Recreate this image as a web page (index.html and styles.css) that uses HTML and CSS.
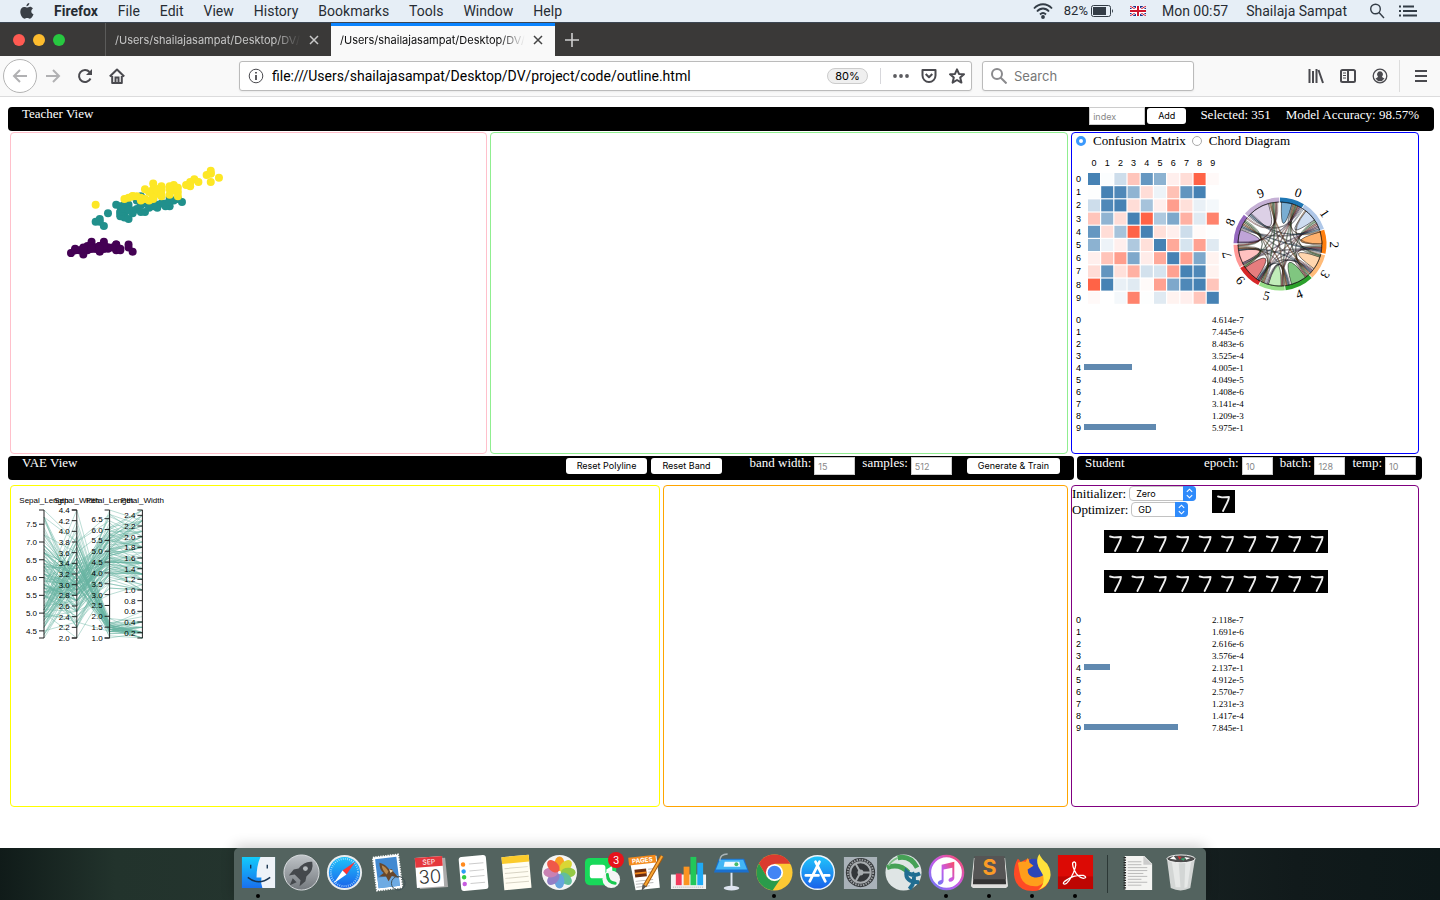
FILE: index.html
```html
<!DOCTYPE html>
<html lang="en">
<head>
<meta charset="utf-8">
<title>Teacher / Student outline</title>
<link rel="stylesheet" href="styles.css">
</head>
<body>
<nav class="menubar" aria-label="System menu">
  <svg class="apple" viewBox="0 0 14 17" aria-hidden="true"><path d="M9.3 0c.1 1.600-1.300 3.300-2.900 3.300C6.200 1.700 7.700.200 9.300 0zM7.100 4.600c.700 0 1.600-.800 2.900-.800 1 0 2.200.500 2.900 1.600-2.400 1.500-2 4.800.600 5.800-.700 2-2.200 4.500-3.700 4.500-1 0-1.400-.600-2.600-.600s-1.700.600-2.600.600C2.700 15.700.300 12 .300 8.700c0-3 1.900-4.800 3.900-4.800 1.300 0 2.200.700 2.900.700z"/></svg>
  <b>Firefox</b><span>File</span><span>Edit</span><span>View</span><span>History</span><span>Bookmarks</span><span>Tools</span><span>Window</span><span>Help</span>
  <div class="status">
    <svg class="wifi" viewBox="0 0 20 16" fill="none" stroke="#333c46" stroke-width="1.800"><path d="M1 5.500C6-.2 14-.2 19 5.500M4 8.500c3.500-4 8.500-4 12 0M7 11.500c2-2 4-2 6 0"/><circle cx="10" cy="14" r="1" fill="#333c46"/></svg>
    <span class="pct">82%</span>
    <svg class="batt" viewBox="0 0 23 12"><rect x=".5" y=".5" width="19" height="11" rx="2" fill="none" stroke="#333c46"/><path d="M2 2h13v8H2zM21 4q2 2 0 4z" fill="#333c46"/></svg>
    <svg class="flag" viewBox="0 0 16 10"><path fill="#1c2e8a" d="M0 0h16v10H0z"/><path d="m0 0 16 10M16 0 0 10" stroke="#fff" stroke-width="2.400"/><path d="m0 0 16 10M16 0 0 10" stroke="#d0142c"/><path d="M8 0v10M0 5h16" stroke="#fff" stroke-width="4"/><path d="M8 0v10M0 5h16" stroke="#d0142c" stroke-width="2"/></svg>
    <span class="clock">Mon 00:57</span><span class="user">Shailaja Sampat</span>
    <svg class="find" viewBox="0 0 16 16" fill="none" stroke="#333c46" stroke-width="1.400"><circle cx="6.500" cy="6" r="4.800"/><path d="m10 9.500 5 5.500"/></svg>
    <svg class="list" viewBox="0 0 18 12" stroke="#333c46" stroke-width="1.800"><path d="M0 1.500h2M4 1.500h11M0 6h2M4 6h14M0 10.500h2M4 10.500h14"/></svg>
  </div>
</nav>

<header class="tabs">
  <div class="lights"><i class="red"></i><i class="amber"></i><i class="green"></i></div>
  <div class="tab"><span>/Users/shailajasampat/Desktop/DV/project</span><button aria-label="Close tab"><svg viewBox="0 0 10 10"><path d="m1 1 8 8M9 1 1 9"/></svg></button></div>
  <div class="tab active"><span>/Users/shailajasampat/Desktop/DV/project</span><button aria-label="Close tab"><svg viewBox="0 0 10 10"><path d="m1 1 8 8M9 1 1 9"/></svg></button></div>
  <button class="plus" aria-label="New tab"><svg viewBox="0 0 14 14"><path d="M7 0v14M0 7h14"/></svg></button>
</header>

<div class="toolbar">
  <button class="back" aria-label="Back"><svg viewBox="0 0 16 16"><path d="M15 8H2M8 2 2 8l6 6"/></svg></button>
  <button class="tool faint" aria-label="Forward"><svg viewBox="0 0 16 16"><path d="M1 8h13M8 2l6 6-6 6"/></svg></button>
  <button class="tool" aria-label="Reload"><svg viewBox="0 0 16 16"><path d="M13.500 10.500A6 6 0 1 1 12.500 4"/><path d="M15 1v6H9z" fill="#4a4a4f" stroke="none"/></svg></button>
  <button class="tool" aria-label="Home"><svg viewBox="0 0 16 16"><path d="M.800 8.500 8 1.500l7.200 7M3.200 8v7h9.600V8" stroke-linejoin="round"/><path d="M6.500 15V9.500h3V15"/></svg></button>
  <div class="urlbox">
    <svg class="info" viewBox="0 0 16 16"><circle cx="8" cy="8" r="6.800"/><path d="M8 7v5M8 4v1.600" stroke-width="1.800"/></svg>
    <input aria-label="Address" value="file:///Users/shailajasampat/Desktop/DV/project/code/outline.html">
    <button class="zoom">80%</button>
    <svg class="dots" viewBox="0 0 16 16"><g fill="#5c5c60" stroke="none"><circle cx="2" cy="8" r="1.900"/><circle cx="8" cy="8" r="1.900"/><circle cx="14" cy="8" r="1.900"/></g></svg>
    <svg viewBox="0 0 16 16"><path d="M1.500 2h13v5.500a6.500 6.500 0 0 1-13 0zM4.700 6 8 9.300 11.300 6" stroke-linejoin="round"/></svg>
    <svg viewBox="0 0 16 16"><path d="m8 1.300 2 4.600 5 .4-3.800 3.300 1.200 5L8 12l-4.400 2.600 1.200-5L1 6.300l5-.4z" stroke-linejoin="round"/></svg>
  </div>
  <div class="searchbox">
    <svg viewBox="0 0 16 16"><circle cx="6" cy="6" r="5"/><path d="m9.500 9.500 6 6"/></svg>
    <input aria-label="Search" placeholder="Search">
  </div>
  <div class="right">
    <button class="tool" aria-label="Library"><svg viewBox="0 0 16 16"><path d="M1.500 1v14M5 3v12M8.500 1v14M10.500 2l4.500 13"/></svg></button>
    <button class="tool" aria-label="Sidebars"><svg viewBox="0 0 16 16"><rect x="1" y="2" width="14" height="12" rx="1.500"/><path d="M8 2v12"/><path d="M3 5h3M3 7.500h3M3 10h3" stroke-width="1"/></svg></button>
    <button class="tool" aria-label="Account"><svg viewBox="0 0 16 16"><circle cx="8" cy="8" r="6.800" stroke-width="1.300"/><path d="M8 3.300a3 3 0 0 1 2 5.200q0 1 2.500 2-1.800 2.700-4.500 2.700T3.500 10.500Q6 9.500 6 8.500a3 3 0 0 1 2-5.200z" fill="#4a4a4f" stroke="none"/></svg></button>
    <button class="tool menu" aria-label="Menu"><svg viewBox="0 0 16 16"><path d="M2 3h12M2 8h12M2 13h12"/></svg></button>
  </div>
</div>

<main class="page">
  <div class="bar top">
    <h2>Teacher View</h2>
    <div class="bar-tools">
      <input class="w-index" placeholder="index" aria-label="index"><button class="add">Add</button>
      <span class="selected">Selected: 351</span><span>Model Accuracy: 98.57%</span>
    </div>
  </div>
  <div class="row upper">
    <section class="panel pink"><svg class="scatter" id="scatter" viewBox="0 0 240 140"></svg></section>
    <section class="panel lime"></section>
    <section class="panel blue">
      <div class="radios">
        <label><input type="radio" name="view" checked>Confusion Matrix</label>
        <label><input type="radio" name="view">Chord Diagram</label>
      </div>
      <div class="figs">
        <svg class="matrix" id="matrix" viewBox="0 0 150 155"></svg>
        <svg class="chord" id="chord" viewBox="0 0 130 130"></svg>
      </div>
      <div class="probs" id="teacher-probs"></div>
    </section>
  </div>
  <div class="row bars">
    <div class="bar">
      <h2>VAE View</h2>
      <div class="bar-tools">
        <button>Reset Polyline</button><button class="band">Reset Band</button>
        <label>band width: <input class="w-mid" placeholder="15"></label>
        <label>samples: <input class="w-mid" placeholder="512"></label>
        <button class="train">Generate &amp; Train</button>
      </div>
    </div>
    <div class="bar">
      <h2>Student</h2>
      <div class="bar-tools student">
        <label>epoch: <input class="w-small" placeholder="10"></label>
        <label>batch: <input class="w-small" placeholder="128"></label>
        <label>temp: <input class="w-small" placeholder="10"></label>
      </div>
    </div>
  </div>
  <div class="row lower">
    <section class="panel yellow"><svg class="parallel" id="parallel" viewBox="0 0 170 165"></svg></section>
    <section class="panel orange"></section>
    <section class="panel purple">
      <div class="setup">
        <div class="opts">
          <label>Initializer: <span class="pick wide"><select><option>Zero</option></select><svg viewBox="0 0 12 14"><path d="M3.500 5.500 6 3l2.500 2.500M3.500 8.500 6 11l2.500-2.500"/></svg></span></label>
          <label>Optimizer: <span class="pick"><select><option>GD</option></select><svg viewBox="0 0 12 14"><path d="M3.500 5.500 6 3l2.500 2.500M3.500 8.500 6 11l2.500-2.500"/></svg></span></label>
        </div>
        <svg class="digit" data-count="1"></svg>
      </div>
      <svg class="strip" data-count="10"></svg>
      <svg class="strip" data-count="10"></svg>
      <div class="probs" id="student-probs"></div>
    </section>
  </div>
</main>

<footer class="desk">
  <div class="dock">
    <div class="app on"><svg viewBox="0 0 40 40"><defs><linearGradient id="gf" x2="0" y2="1"><stop stop-color="#12cbfa"/><stop offset="1" stop-color="#1a6fee"/></linearGradient><linearGradient id="gs" x2="0" y2="1"><stop stop-color="#bfc4c8"/><stop offset="1" stop-color="#74797e"/></linearGradient><linearGradient id="gb" x2="0" y2="1"><stop stop-color="#20c4fb"/><stop offset="1" stop-color="#1a62ea"/></linearGradient></defs><path fill="url(#gf)" d="M3 4h34v32H3z"/><path fill="#eef2f8" d="M22 4h15v32H24q-2-6-1-11h-5q0-12 4-21z"/><path d="M12 12v4M29 12v4M9 25q11 9 23 0" fill="none" stroke="#17324f" stroke-width="1.400"/></svg></div>
    <div class="app"><svg viewBox="0 0 40 40"><circle cx="20" cy="20" r="18" fill="url(#gs)" stroke="#d9dcdf"/><path d="M31 9q-8-1-14 7l-5 1-5 6 6-1 6 6-1 6 6-5 1-5q8-6 6-15zM11 26l-3 7 7-3z" fill="#44484c"/><circle cx="24" cy="16" r="2.500" fill="#b5babd"/></svg></div>
    <div class="app"><svg viewBox="0 0 40 40"><circle cx="20" cy="20" r="18" fill="#e9ecee"/><circle cx="20" cy="20" r="16" fill="url(#gb)"/><circle cx="20" cy="20" r="14" fill="none" stroke="#bfe7ff" stroke-width="2" stroke-dasharray=".7 1.500"/><path fill="#f33" d="m31 9-13 9 4 4z"/><path fill="#fff" d="m9 31 9-13 4 4z"/></svg></div>
    <div class="app"><svg viewBox="0 0 40 40"><g transform="rotate(-7 20 20)"><path d="M7 3h26v34H7z" fill="#fff" stroke="#fff" stroke-width="2" stroke-dasharray="1.500 1"/><path fill="#4289d1" d="M9 5h22v30H9z"/><path fill="#6eabe3" d="M9 24h22v11H9z"/><path fill="#68472b" d="M13 9q6 2 9 8 4-1 4 3l5 7-7-3-4 5-2-5-7-1 5-3q-4-4-3-11z"/><path fill="#b98a4e" d="M15 12q4 2 6 7l-2 3q-4-4-4-10z"/><path fill="#ead7ae" d="m22 17 4 2-3 2z"/></g><circle cx="31" cy="31" r="7" fill="none" stroke="#405054"/></svg></div>
    <div class="app"><svg viewBox="0 0 40 40"><g transform="rotate(-4 20 20)"><path fill="#aaa" d="M7 6h29l1 30H8z"/><path fill="#fff" d="M5 4h28v31H5z"/><path fill="#e5373d" d="M5 4h28v10H5z"/><text x="19" y="11.500" text-anchor="middle" font-size="7" fill="#fff">SEP</text><text x="19" y="31" text-anchor="middle" font-size="19" fill="#333" font-weight="300">30</text></g></svg></div>
    <div class="app"><svg viewBox="0 0 40 40"><g transform="rotate(-5 20 20)"><rect x="6" y="3" width="28" height="35" rx="3" fill="#fff"/><path d="M16 11h15M16 18h15M16 24h15M16 31h15" stroke="#ccc"/><circle cx="10" cy="11" r="2.300" fill="#ff8a1e"/><circle cx="10" cy="18" r="2.300" fill="#2b9cf5"/><circle cx="10" cy="24" r="2.300" fill="#31cd45"/><circle cx="10" cy="31" r="2.300" fill="#c75ce0"/></g></svg></div>
    <div class="app"><svg viewBox="0 0 40 40"><g transform="rotate(-5 20 20)"><path fill="#fffdf2" d="M6 3h28v34H6z"/><path fill="#fbcb2c" d="M6 3h28v7H6z"/><path d="M8 15h24M8 20h24M8 25h24M8 30h24" stroke="#d8d4c4"/></g></svg></div>
    <div class="app"><svg viewBox="0 0 40 40"><circle cx="20" cy="20" r="18" fill="#f4f4f4"/><g opacity=".95"><ellipse cx="20" cy="11" rx="5" ry="7.500" fill="#fb9d18"/><ellipse cx="20" cy="11" rx="5" ry="7.500" fill="#d9d52a" transform="rotate(45 20 20)"/><ellipse cx="20" cy="11" rx="5" ry="7.500" fill="#8fc73c" transform="rotate(90 20 20)"/><ellipse cx="20" cy="11" rx="5" ry="7.500" fill="#5bbd96" transform="rotate(135 20 20)"/><ellipse cx="20" cy="11" rx="5" ry="7.500" fill="#5fa0dc" transform="rotate(180 20 20)"/><ellipse cx="20" cy="11" rx="5" ry="7.500" fill="#8c79c4" transform="rotate(225 20 20)"/><ellipse cx="20" cy="11" rx="5" ry="7.500" fill="#c77bb0" transform="rotate(270 20 20)"/><ellipse cx="20" cy="11" rx="5" ry="7.500" fill="#ef5040" transform="rotate(315 20 20)"/></g></svg></div>
    <div class="app"><svg viewBox="0 0 40 40"><rect x="2" y="5" width="32" height="28" rx="5" fill="#18d95a"/><rect x="7" y="12" width="16" height="14" rx="3" fill="#fff"/><path fill="#fff" d="m24 17 6-4v12l-6-4z"/><circle cx="29" cy="27" r="9" fill="#f5f5f5"/><path d="M25 22q0 8 8 9" stroke="#18c950" stroke-width="3" stroke-linecap="round" fill="none"/></svg><span class="badge">3</span></div>
    <div class="app"><svg viewBox="0 0 40 40"><g transform="rotate(-6 20 20)"><path fill="#fff" d="M5 4h28v33H8z"/><path fill="#f48a1c" d="M4 3h28v8H4z"/><text x="18" y="9.500" text-anchor="middle" font-size="6.500" fill="#fff" font-weight="700">PAGES</text><path fill="#6b2d12" d="M9 16h12v8H9z"/><path fill="#f48a1c" d="M9 19h12v2H9z"/><path d="M9 28h18M9 31h18M9 34h14M23 17h7M23 20h7" stroke="#bbb"/></g><path d="M37 3 19 34" stroke="#a85a0b" stroke-width="4"/><path d="M37 3 19 34" stroke="#f9a734" stroke-width="2"/><path fill="#555" d="m17 32 4 2-5 5z"/></svg></div>
    <div class="app"><svg viewBox="0 0 40 40"><path fill="#f2f2f2" d="M2 22h36v15H2z"/><path fill="#f33a5c" d="M7 21h6v12H7z"/><path fill="#fb9422" d="M15 14h6v19h-6z"/><path fill="#22c759" d="M22 4h6v29h-6z"/><path fill="#1fa9f5" d="M29 10h6v23h-6z"/><path d="M4 35h32" stroke="#aaa" stroke-dasharray="1 1"/></svg></div>
    <div class="app"><svg viewBox="0 0 40 40"><ellipse cx="20" cy="36" rx="8" ry="2.500" fill="#dce3ee"/><path d="M20 20v16" stroke="#dfe6f0" stroke-width="2"/><path fill="#1a70cf" d="M7 6h26l5 14H2z"/><path fill="#43b6f5" d="M8 7h24l4 10H4z"/><path fill="#f2fbff" d="M13 9h15l1 5H12z"/><path d="M8 8Q8 1 16 1" stroke="#aab5b8" fill="none" stroke-width="1.500"/><circle cx="25" cy="11.500" r="2" fill="#43bb6c"/></svg></div>
    <div class="app on"><svg viewBox="0 0 40 40"><circle cx="20" cy="20" r="18.500" fill="#fcc934"/><path fill="#db3a2f" d="M20 20V11h16.200A18.500 18.500 0 0 0 4 10.700l8.200 13.800z"/><path fill="#2a9b4b" d="M4 10.700A18.500 18.500 0 0 0 18 38.400l9.800-14.400L20 29l-7.800-4.500z"/><circle cx="20" cy="20" r="8.800" fill="#fff"/><circle cx="20" cy="20" r="7" fill="#4285f4"/></svg></div>
    <div class="app"><svg viewBox="0 0 40 40"><circle cx="20" cy="20" r="18" fill="#eef4fa"/><circle cx="20" cy="20" r="16.500" fill="url(#gb)"/><path d="M22 9 12 29M18 9l10 20M8 23h13M27 23h5" stroke="#fff" stroke-width="2.800" stroke-linecap="round"/></svg></div>
    <div class="app"><svg viewBox="0 0 40 40"><path fill="#a9b2b9" d="M3 4h34v33H3z"/><circle cx="20" cy="20" r="15" fill="#34373a"/><circle cx="20" cy="20" r="13" fill="none" stroke="#9a9ea1" stroke-width="2" stroke-dasharray="1.600 1.100"/><circle cx="20" cy="20" r="10.500" fill="none" stroke="#a7abae" stroke-width="2"/><path d="m20 20-5-9m5 9-5 9m5-9h10" stroke="#a7abae" stroke-width="2"/><circle cx="20" cy="20" r="3" fill="#a7abae"/></svg></div>
    <div class="app"><svg viewBox="0 0 40 40"><circle cx="20" cy="20" r="18.500" fill="#dfe5e5"/><path fill="none" stroke="#46a156" stroke-width="5" d="M3 15q13-5 22 5M14 5q13-3 20 10"/><path fill="none" stroke="#7fc089" stroke-width="2" d="M14 5Q7 8 5 13"/><path fill="none" stroke="#206d91" stroke-width="4" d="M37 21q-8 4-14-2-2 11 13 11M29 20q5 8-3 17"/></svg></div>
    <div class="app on"><svg viewBox="0 0 40 40"><defs><linearGradient id="gi" x1="0" y1="1" x2="1" y2="0"><stop stop-color="#6a7bf6"/><stop offset=".5" stop-color="#c65ae8"/><stop offset="1" stop-color="#fb4c62"/></linearGradient></defs><circle cx="20" cy="20" r="17" fill="#fff" stroke="url(#gi)" stroke-width="2.500"/><path fill="url(#gi)" d="M15 12 28 9v17q-1 4-5 3.500-3-3 3-5V15l-9 2v12q-1 4-5 3.500-3-3 3-5z"/></svg></div>
    <div class="app on"><svg viewBox="0 0 40 40"><path fill="#dfdfdd" d="M4 5h32l3 29-2 2H3l-2-2z"/><path fill="#343434" d="M5 3h30l2 29H3z"/><path fill="#555" d="M5 3h30l2 24H3z"/><text x="20" y="23" font-size="22" font-weight="700" text-anchor="middle" fill="#fb9b26">S</text></svg></div>
    <div class="app on"><svg viewBox="0 0 40 40"><path fill="#ff4a25" d="M5 6q2 1 3 4 4-4 10-4l14 6 6 8q0 19-18 19Q3 39 1 22q0-10 4-16z"/><circle cx="21" cy="18" r="12" fill="#2d46b8"/><path fill="#ff9e1b" d="M5 10q5-2 8-1l2-4q2 2 2 5l4 3-6 4q0 7 7 8 8 1 12-6 2 12-9 15-13 1-17-9-2-8-3-15z"/><path fill="#ffe23b" d="M27 1q2 5 8 10 5 8 3 15-3 9-12 12 7-6 5-15l-5-9q-3-7 1-13z"/></svg></div>
    <div class="app on"><svg viewBox="0 0 40 40"><path fill="#dc0a05" d="M2 2h36v35H2z"/><path fill="#a80100" d="M2 24h36v13H2z" opacity=".6"/><path d="M19 9q-4 0 0 9 3 7 9 8 5-1 0-3-9-1-16 4-7 4-3 5 4-1 9-12 4-10 1-11z" stroke="#fff" fill="none" stroke-width="1.300"/></svg></div>
    <i class="divider"></i>
    <div class="app"><svg viewBox="0 0 40 40"><path fill="#f4f4f2" d="M7 3h20l8 8v27H7z"/><path fill="#ccc" d="M26 3v9h9z"/><path d="M10 9h14M10 12h14M10 15h20M10 18h20M10 21h16M10 24h20M10 27h14M10 30h20M10 33h14" stroke="#aaa" stroke-width=".8"/><path d="M7 4v34" stroke="#222" stroke-width="2.500" stroke-dasharray="1.300 1.300"/></svg></div>
    <div class="app"><svg viewBox="0 0 40 40"><path fill="#d3d6d5" d="m6 5 4 31q10 5 20 0l5-31z"/><path fill="#e6e8e7" d="m11 8 4 27h5L18 8zM25 8l-1 28 3-1 4-27z"/><ellipse cx="20.500" cy="6" rx="14.500" ry="4" fill="#4d4d4d" stroke="#f1f1f1"/><path fill="#fff" d="m9 6 4-3 3 4zM24 4l6 1-4 2z"/><path fill="#c33" d="m17 3 4 1-2 3z"/><path fill="#38a870" d="m20 6 5-1-2 3z"/></svg></div>
  </div>
</footer>
<script src="charts.js"></script>
</body>
</html>
```

FILE: styles.css
```css
* { box-sizing: border-box; }
body {
  margin: 0;
  min-height: 100vh;
  display: flex;
  flex-direction: column;
  background: #fff;
  font: 13px/16px "Liberation Serif", "Times New Roman", serif;
  color: #000;
}
svg { display: block; flex: none; }
button, input, select { font: inherit; color: inherit; margin: 0; }
button { border: 0; padding: 0; background: none; }

.menubar {
  display: flex;
  align-items: center;
  gap: 20px;
  height: 23px;
  padding: 0 23px 0 20px;
  background: #e6eef6;
  border-bottom: 1px solid #3c4652;
  font: 14px/22px Roboto, "Open Sans", sans-serif;
  color: #262c33;
}
.apple { width: 14px; height: 17px; fill: #3a3f46; }
.status { display: flex; align-items: center; margin-left: auto; }
.wifi { width: 20px; height: 16px; }
.pct { font-size: 13px; margin: 0 3px 0 11px; }
.batt { width: 23px; height: 12px; }
.flag { width: 16px; height: 10px; margin: 0 16px; }
.user { margin: 0 22px 0 18px; }
.find { width: 16px; height: 16px; margin-right: 14px; }
.list { width: 18px; height: 12px; }

.tabs { display: flex; height: 33px; background: #3a3938; font: 11px/16px Inter, sans-serif; }
.lights { display: flex; align-items: center; gap: 8px; width: 106px; padding-left: 13px; border-right: 1px solid #5b5b5a; }
.lights i { width: 12px; height: 12px; border-radius: 50%; }
.red { background: #ff5a52; }
.amber { background: #fdbc2e; }
.green { background: #27c840; }
.tab { display: flex; align-items: center; gap: 8px; width: 225px; padding: 0 12px 0 9px; color: #c6c6c6; }
.tab span { flex: 1; overflow: hidden; white-space: nowrap; mask-image: linear-gradient(90deg, #000 86%, transparent 100%); }
.tab svg { width: 10px; height: 10px; stroke: #c9c9c9; stroke-width: 1.5; }
.tab.active { width: 224px; background: #f9f9f9; color: #0c0c0d; padding-bottom: 3px; border-top: 3px solid #0a84ff; }
.tab.active svg { stroke: #444; }
.plus { padding: 0 10px; }
.plus svg { width: 14px; height: 14px; stroke: #cfcfcf; stroke-width: 1.6; }

.toolbar {
  display: flex;
  align-items: center;
  height: 41px;
  padding: 0 3px;
  background: #f9f9f9;
  border-bottom: 1px solid #dcdcdd;
  font: 13px/18px Inter, sans-serif;
}
.toolbar svg { width: 16px; height: 16px; fill: none; stroke: #4a4a4f; stroke-width: 2; }
.back { display: grid; place-items: center; width: 34px; height: 34px; border: 1px solid #b4b4b4; border-radius: 50%; background: #fff; }
.toolbar .back svg, .toolbar .faint svg { stroke: #b1b1b3; }
.tool { display: grid; place-items: center; width: 32px; height: 32px; }
.urlbox, .searchbox { display: flex; align-items: center; height: 30px; border: 1px solid #bbb; border-radius: 3px; background: #fff; box-shadow: 0 1px 2px #0001; }
.urlbox { flex: 1; gap: 12px; margin-left: 106px; padding: 0 6px 0 8px; }
.toolbar .info { stroke-width: 1; }
.urlbox input, .searchbox input { flex: 1; min-width: 0; border: 0; padding: 0; outline: 0; background: none; }
.urlbox input { margin-left: -4px; font: 14px/18px Roboto, sans-serif; }
.zoom { width: 41px; height: 16px; border: 1px solid #ccc; border-radius: 8px; background: #efefef; font-size: 11px; line-height: 14px; }
.toolbar .dots { box-sizing: content-box; padding-left: 12px; border-left: 1px solid #d7d7db; }
.searchbox { width: 212px; margin: 0 106px 0 10px; padding: 0 8px; gap: 7px; }
.toolbar .searchbox svg { stroke: #8a8a8d; }
.searchbox input::placeholder { color: #777; }
.right { display: flex; }
.menu { width: 38px; margin-left: 3px; border-left: 1px solid #ddd; padding-left: 4px; }

.page { flex: 1; padding-top: 10px; }
.bar { display: flex; justify-content: space-between; height: 24px; background: #000; color: #fff; border-radius: 4px; padding: 0 15px 0 14px; }
.bar.top { margin: 0 6px 1px 8px; }
.bar h2 { margin: 0; font: inherit; line-height: 14px; }
.bars .bar { padding-right: 14px; padding-left: 14px; }
.bars .bar + .bar { padding: 0 6px 0 8px; }
.bar-tools { display: flex; align-items: flex-start; white-space: nowrap; }
.bar-tools > span { line-height: 16px; }
.bar-tools .selected { margin: 0 15px 0 14px; }
.bar-tools label { display: flex; gap: 3px; line-height: 14px; margin-left: 7px; }
.bar-tools button { height: 16px; margin-top: 1px; padding: 0 11px; border-radius: 3px; background: #fff; color: #000; font: 9px/16px Inter, sans-serif; }
.bars .bar-tools button { margin-top: 2px; }
.bar-tools .add { margin-left: 2px; }
.bars .bar-tools .band { margin: 2px 21px 0 4px; }
.bar-tools .train { margin-left: 15px; }
.bar input { height: 18px; border: 1px solid #ccc; padding: 0 3px; background: #fff; color: #000; font: 9px/16px Inter, sans-serif; }
.bars .bar input { margin-top: 1px; }
.bar input::placeholder { color: #888; }
.bar .w-index { width: 56px; }
.bar .w-mid { width: 41px; }
.bar .w-small { width: 31px; }

.row { display: grid; column-gap: 3px; }
.upper, .lower { padding: 0 21px 0 10px; }
.upper { grid-template-columns: 477fr 578fr 348fr; }
.bars { grid-template-columns: 1066fr 345fr; margin: 2px 18px 5px 8px; }
.lower { grid-template-columns: 650fr 405fr 348fr; }
.panel { min-width: 0; min-height: 322px; border: 1px solid; border-radius: 4px; }
.pink { border-color: pink; }
.lime { border-color: lightgreen; }
.blue { border-color: blue; }
.yellow { border-color: #ff0; }
.orange { border-color: orange; }
.purple { border-color: purple; }

.scatter { width: 240px; height: 140px; }
.radios { display: flex; gap: 6px; padding-left: 4px; }
.radios label { display: flex; align-items: center; gap: 7px; }
.radios input { appearance: none; width: 10px; height: 10px; border: 1px solid #aaa; border-radius: 50%; background: #fff; }
.radios input:checked { border: 3px solid #3b99fc; }
.figs { display: flex; align-items: flex-start; }
.figs text, .parallel text { font-family: "Liberation Sans", Arial, sans-serif; }
.matrix { width: 150px; height: 155px; }
.chord { width: 130px; height: 130px; margin-top: 30px; margin-left: -7px; }
.figs .tick { font: 13px "Liberation Serif", serif; }
.probs { padding: 0 0 0 4px; }
.blue .probs { padding-top: 5px; }
.purple .probs { padding-top: 4px; }
.prob { display: grid; grid-template-columns: 8px 128px auto; height: 12px; line-height: 12px; align-items: center; font-size: 9px; }
.prob span { font: 9px/12px "Liberation Sans", Arial, sans-serif; }
.prob i { height: 6px; margin-bottom: 2px; background: #6089b0; }

.setup { display: flex; height: 44px; }
.opts { width: 140px; }
.opts label { display: flex; gap: 3px; height: 16px; line-height: 15px; }
.pick { position: relative; width: 57px; height: 15px; }
.pick.wide { width: 67px; }
.pick select { display: block; appearance: none; width: 100%; height: 15px; border: 1px solid #c2c2c2; border-radius: 4px; background: #fff; padding: 0 6px; font: 9px/13px Inter, sans-serif; }
.pick svg { position: absolute; top: 0; right: 0; width: 13px; height: 15px; border-radius: 0 4px 4px 0; background: #2f8bfb; fill: none; stroke: #fff; pointer-events: none; }
.digit { width: 23px; height: 23px; margin-top: 4px; background: #000; }
.strip { width: 224px; height: 23px; margin: 0 0 17px 32px; background: #000; }

.parallel { width: 170px; height: 165px; overflow: visible; }

.desk { display: flex; justify-content: center; height: 52px; background: linear-gradient(90deg, #101b19, #22332c 8%, #2b3835 50%, #111a1b 90%, #0d1819); }
.dock { display: flex; width: 972px; padding: 0 3px; background: #53635f; border-radius: 5px 5px 0 0; box-shadow: 0 -2px 14px #0003; }
.app { position: relative; width: 43px; padding: 5px 2px 0; }
.app svg { width: 39px; height: 39px; font-family: Inter, sans-serif; }
.app.on::after { content: ""; position: absolute; left: 19px; bottom: 2px; width: 4px; height: 4px; border-radius: 50%; background: #000; }
.badge { position: absolute; top: 4px; right: 0; width: 16px; height: 16px; border-radius: 50%; background: #e7131b; color: #fff; font: 10px/16px Inter, sans-serif; text-align: center; }
.divider { width: 1px; margin: 7px 8px 7px 10px; background: #2c3836; }
```

FILE: charts.js
```js
const NS = 'http://www.w3.org/2000/svg';
function add(parent, tag, attrs, text) {
  const el = document.createElementNS(NS, tag);
  for (const k in attrs) el.setAttribute(k, attrs[k]);
  if (text !== undefined) el.textContent = text;
  parent.appendChild(el);
  return el;
}

// Iris measurements in tenths: sepal length, sepal width, petal length, petal width.
const species = [
  '51351402 49301402 47321302 46311502 50361402 54391704 46341403 50341502 44291402 49311501 54371502 48341602 48301401 43301101 58401202 57441504 54391304 51351403 57381703 51381503 54341702 51371504 46361002 51331705 48341902 50301602 50341604 52351502 52341402 47321602 48311602 54341504 52411501 55421402 49311502 50321202 55351302 49361401 44301302 51341502 50351303 45231303 44321302 50351606 51381904 48301403 51381602 46321402 53371502 50331402',
  '70324714 64324515 69314915 55234013 65284615 57284513 63334716 49243310 66294613 52273914 50203510 59304215 60224010 61294714 56293613 67314414 56304515 58274110 62224515 56253911 59324818 61284013 63254915 61284712 64294313 66304414 68284814 67305017 60294515 57263510 55243811 55243710 58273912 60275116 54304515 60344516 67314715 63234413 56304113 55254013 55264412 61304614 58264012 50233310 56274213 57304212 57294213 62294313 51253011 57284113',
  '63336025 58275119 71305921 63295618 65305822 76306621 49254517 73296318 67255818 72366125 65325120 64275319 68305521 57255020 58285124 64325323 65305518 77386722 77266923 60225015 69325723 56284920 77286720 63274918 67335721 72326018 62284818 61304918 64285621 72305816 74286119 79386420 64285622 63285115 61265614 77306123 63345624 64315518 60304818 69315421 67315624 69315123 58275119 68325923 67335725 67305223 63255019 65305220 62345423 59305118'
].map(s => s.split(' ').map(r => r.match(/../g).map(v => v / 10)));

// Scatter plot
const scatter = document.getElementById('scatter');
species.forEach((rows, k) => rows.forEach(r => add(scatter, 'circle', {
  cx: 60 + (r[0] - 4.3) * 41.1, cy: 121.5 - (r[2] - 1) * 14.2, r: 4,
  fill: ['#440154', '#21908c', '#fde725'][k]
})));

// Parallel coordinates
const parallel = document.getElementById('parallel');
const axes = [
  ['Sepal_Length', 4.3, 7.9, 4.5, 0.5], ['Sepal_Width', 2, 4.4, 2, 0.2],
  ['Petal_Length', 1, 6.9, 1, 0.5], ['Petal_Width', 0.1, 2.5, 0.2, 0.2]
];
const ax = i => 33 + i * 32.8;
const ay = (i, v) => 152 - (v - axes[i][1]) / (axes[i][2] - axes[i][1]) * 128;
species.flat().forEach(r => add(parallel, 'path', {
  d: 'M' + r.map((v, i) => ax(i) + ',' + ay(i, v)).join('L'),
  fill: 'none', stroke: '#69b3a2', 'stroke-width': 0.9, opacity: 0.5
}));
axes.forEach(([name, lo, hi, first, step], i) => {
  const x = ax(i);
  add(parallel, 'path', { d: `M${x - 5},24H${x}V152H${x - 5}`, fill: 'none', stroke: '#222' });
  for (let v = first; v <= hi + 0.001; v += step) {
    const y = ay(i, v);
    add(parallel, 'path', { d: `M${x - 5},${y}H${x}`, stroke: '#222' });
    add(parallel, 'text', { x: x - 7, y: y + 3, 'font-size': 8, 'text-anchor': 'end' }, v.toFixed(1));
  }
  add(parallel, 'text', { x, y: 17, 'font-size': 8, 'text-anchor': 'middle' }, name);
});

// Confusion matrix: positive values are blue, negative are red
const matrix = document.getElementById('matrix');
const cells = [
  [1, .02, .27, -.37, .83, .62, -.1, -.22, -1, -.04],
  [.01, 1, .95, .6, -.22, .1, -.4, .85, 1, 0],
  [.27, .95, 1, -.22, .48, -.1, -.62, -.2, .12, .06],
  [-.37, .6, -.22, 1, -1, .43, .7, -.5, .17, -.8],
  [.83, -.22, .48, -1, 1, -.2, -.1, .27, -.03, .01],
  [.62, .1, -.1, .43, -.2, 1, -.55, .22, -.6, .17],
  [-.1, -.38, -.62, .7, -.12, -.55, 1, -.6, .7, -.08],
  [-.22, .85, -.2, -.5, .24, .22, -.6, 1, .95, -.08],
  [-1, 1, .12, .17, -.03, -.6, .7, .95, 1, -.37],
  [-.04, 0, .06, -.8, .01, .17, -.08, -.1, -.37, 1]
];
const shade = v => {
  const to = v > 0 ? [70, 130, 180] : [255, 99, 71];
  return `rgb(${to.map(c => Math.round(255 + (c - 255) * Math.abs(v)))})`;
};
cells.forEach((row, i) => {
  add(matrix, 'text', { x: 22 + i * 13.2, y: 17, 'font-size': 9, 'text-anchor': 'middle' }, i);
  add(matrix, 'text', { x: 4, y: 33 + i * 13.2, 'font-size': 9 }, i);
  row.forEach((v, j) => add(matrix, 'rect', {
    x: 16 + j * 13.2, y: 24 + i * 13.2, width: 12, height: 12, fill: shade(v)
  }));
});

// Chord diagram. Each group: start, end, start and end of its own petal (degrees).
const chord = document.getElementById('chord');
const groups = [
  [0, 31, 2, 17, '#1f77b4'], [32, 71, 38, 55, '#aec7e8'], [72, 102, 73, 90, '#ff7f0e'],
  [104, 136, 108, 126, '#ffbb78'], [137, 173, 142, 164, '#2ca02c'], [174, 207, 178, 196, '#98df8a'],
  [208, 239, 214, 236, '#d62728'], [240, 269, 243, 261, '#ff9896'], [271, 309, 272, 290, '#9467bd'],
  [311, 359, 316, 344, '#c5b0d5']
];
const point = (a, r) => {
  const t = (a - 90) * Math.PI / 180;
  return `${(65 + r * Math.cos(t)).toFixed(2)},${(65 + r * Math.sin(t)).toFixed(2)}`;
};
const slot = (g, k) => {
  const [s, e, ps, pe] = groups[g];
  const free = (ps - s) + (e - pe);
  const a = s + free * (k + 0.5) / 10;
  return a > ps ? a + pe - ps : a;
};
groups.forEach(g => {
  add(chord, 'path', {
    d: `M${point(g[0], 46.5)}A46.5,46.5 0 0 1 ${point(g[1], 46.5)}L${point(g[1], 42)}A42,42 0 0 0 ${point(g[0], 42)}Z`,
    fill: g[4]
  });
  add(chord, 'path', { d: `M${point(g[0], 42)}A42,42 0 0 1 ${point(g[1], 42)}`, fill: 'none', stroke: '#111', 'stroke-width': 0.7 });
  add(chord, 'path', {
    d: `M${point(g[2], 42)}A42,42 0 0 1 ${point(g[3], 42)}Q65,65 ${point(g[2], 42)}Z`,
    fill: g[4], 'fill-opacity': 0.6, stroke: '#000', 'stroke-width': 0.5
  });
});
for (let i = 0; i < 10; i++) for (let j = i + 1; j < 10; j++) {
  const a = slot(i, j), b = slot(j, i), w = 0.9;
  add(chord, 'path', {
    d: `M${point(a - w, 42)}Q65,65 ${point(b + w, 42)}L${point(b - w, 42)}Q65,65 ${point(a + w, 42)}Z`,
    fill: groups[(i + j) % 10][4], 'fill-opacity': 0.4, stroke: '#000', 'stroke-width': 0.5, 'stroke-opacity': 0.65
  });
}
groups.forEach((g, i) => {
  const mid = (g[0] + g[1]) / 2 + 4;
  const turn = mid > 134 && mid < 239 ? 180 : 0;
  const [x, y] = point(mid, 54).split(',');
  add(chord, 'text', { class: 'tick', 'text-anchor': 'middle', transform: `translate(${x},${y}) rotate(${mid + turn})`, y: 4 }, i);
});

// Class probabilities
function probs(id, values) {
  const box = document.getElementById(id);
  values.forEach((v, i) => {
    const row = document.createElement('div');
    row.className = 'prob';
    row.innerHTML = `<span>${i}</span><i style="width:${Math.round(v * 120)}px"></i><output>${v}</output>`;
    box.appendChild(row);
  });
}
probs('teacher-probs', ['4.614e-7', '7.445e-6', '8.483e-6', '3.525e-4', '4.005e-1', '4.049e-5', '1.408e-6', '3.141e-4', '1.209e-3', '5.975e-1']);
probs('student-probs', ['2.118e-7', '1.691e-6', '2.616e-6', '3.576e-4', '2.137e-1', '4.912e-5', '2.570e-7', '1.231e-3', '1.417e-4', '7.845e-1']);

// Handwritten digits
document.querySelectorAll('[data-count]').forEach(svg => {
  for (let i = 0; i < +svg.dataset.count; i++) {
    add(svg, 'path', {
      d: `M${6 + i * 22.4},6.500l4,.8 7,-.3q0,2 -2,6l-4,8`,
      fill: 'none', stroke: '#eee', 'stroke-width': 1.8, 'stroke-linecap': 'round', 'stroke-linejoin': 'round'
    });
  }
});
```
